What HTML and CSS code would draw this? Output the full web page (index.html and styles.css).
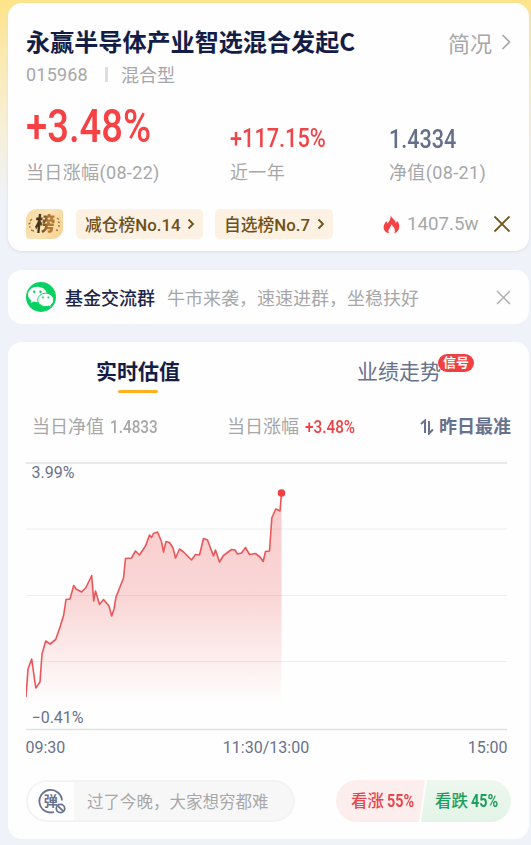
FILE: index.html
```
<!DOCTYPE html>
<html lang="zh-CN">
<head>
    <meta charset="UTF-8">
    <meta name="viewport" content="width=device-width, initial-scale=1.0">
    <title>永赢半导体产业智选混合发起C</title>
    <link rel="stylesheet" href="styles.css">
</head>
<body>

<div class="card fund">
    <div class="fund-head">
        <h1>永赢半导体产业智选混合发起C</h1>
        <a class="more">简况
            <svg width="10" height="18" viewBox="0 0 10 18"><path d="M1.500 2l7 7-7 7"/></svg>
        </a>
    </div>
    <div class="fund-code"><span class="code">015968</span><i></i><span>混合型</span></div>

    <div class="figures">
        <div>
            <div class="value big"><span class="num">+3.48%</span></div>
            <div class="label">当日涨幅(08-22)</div>
        </div>
        <div>
            <div class="value up"><span class="num">+117.15%</span></div>
            <div class="label">近一年</div>
        </div>
        <div>
            <div class="value nav"><span class="num">1.4334</span></div>
            <div class="label">净值(08-21)</div>
        </div>
    </div>

    <div class="ranks">
        <div class="medal">
            <svg width="37" height="30" viewBox="0 0 37 30">
                <path d="M6 10l-2 2M4.500 14l-2 1M4.500 18l-1.500 0M8 22l-3-1M31 9l2 1.500M32 13l2 .5M32 17l2 0M30 21l2 .5"/>
            </svg>
            <span>榜</span>
        </div>
        <div class="chip first">减仓榜No.14
            <svg width="8" height="12" viewBox="0 0 8 12"><path d="M1.500 1.500L6 6l-4.500 4.500"/></svg>
        </div>
        <div class="chip">自选榜No.7
            <svg width="8" height="12" viewBox="0 0 8 12"><path d="M1.500 1.500L6 6l-4.500 4.500"/></svg>
        </div>
        <div class="heat">
            <svg width="17" height="19" viewBox="0 0 17 19">
                <path d="M7.800 0C8.300 3.500 13 5 12.600 8.200C13.500 7.600 13.800 6.600 13.800 5.800C15.600 7.500 16.600 9.700 16.300 12C16 15.200 14 17.500 11.200 18.300C12.600 15.800 12 13.600 9.800 11.200C9.300 10.600 9 10 8.900 9.200C7.300 10.500 8 12 6.700 13.200C5.700 14.200 4.700 15.600 6 18.300C2.800 17.600 .6 15.300 .6 12.200C.6 9.500 2.300 8 3.200 6C3.800 7 4.100 7.700 4.300 8.600C6.700 6.300 7.800 3.500 7.800 0z"/>
            </svg>
            <span>1407.5w</span>
        </div>
        <svg class="close brown" width="18" height="18" viewBox="0 0 18 18"><path d="M1.500 1.500l15 15M16.500 1.500l-15 15"/></svg>
    </div>
</div>

<div class="card group">
    <svg width="30" height="30" viewBox="0 0 30 30">
        <circle cx="15" cy="15" r="15" fill="#07d160"/>
        <path d="M11.500 4.800C6.200 4.800 2 8.200 2 12.600c0 2.400 1.200 4.500 3.300 6L4.700 21.200l3-1.600c1.200.4 2.500.6 3.800.6 5.300 0 9.500-3.400 9.500-7.600S16.800 4.800 11.500 4.800z" fill="#fff"/>
        <circle cx="8.300" cy="9.800" r="1.200" fill="#07d160"/>
        <circle cx="14.500" cy="9.800" r="1.200" fill="#07d160"/>
        <path d="M19.800 11.200c-4.400 0-8 3-8 6.700s3.600 6.700 8 6.700c1 0 2-.2 2.900-.5l2.600 1.400-.6-2.300c1.800-1.200 3-3.100 3-5.300 0-3.700-3.500-6.700-7.900-6.700z" fill="#fff" stroke="#07d160"/>
        <circle cx="17" cy="15.600" r="1" fill="#07d160"/>
        <circle cx="22.400" cy="15.600" r="1" fill="#07d160"/>
    </svg>
    <b>基金交流群</b>
    <span>牛市来袭，速速进群，坐稳扶好</span>
    <svg class="close" width="15" height="15" viewBox="0 0 15 15"><path d="M1 1l13 13M14 1L1 14"/></svg>
</div>

<div class="card trend">
    <div class="tabs">
        <div class="tab active">实时估值</div>
        <div class="tab">业绩走势<span class="badge">信号</span></div>
    </div>

    <div class="today">
        <div class="today-nav">当日净值 <span class="num">1.4833</span></div>
        <div class="today-rate">当日涨幅 <span class="num">+3.48%</span></div>
        <div class="source">
            <svg width="14" height="16" viewBox="0 0 14 16"><path d="M1 5l4-3.500V14M9 2v12.500l4-4"/></svg>
            昨日最准
        </div>
    </div>

    <svg class="chart" width="482" height="306" viewBox="26 456 482 306">
        <defs>
            <linearGradient id="fade" x1="0" y1="493" x2="0" y2="705" gradientUnits="userSpaceOnUse">
                <stop offset="0" stop-color="#f9caca"/>
                <stop offset=".5" stop-color="#fad7d7"/>
                <stop offset="1" stop-color="#fefefe"/>
            </linearGradient>
        </defs>
        <path class="area" d="M26 697L28 669L31.700 659L35.800 688L40 682L42 654L45.700 641L50 644L55.700 639.500L60 627L63.700 615L66 599.500L70 599L73.700 585.500L76 589L81.700 592L86 587.500L91.700 575.500L93.700 601L95.500 591L99.500 604.500L103.500 599.500L109 606L111.700 616L114 609L116 597L123.500 578L125.500 558.500L131.500 558L135.500 551L139.500 555L145.500 546L149.500 535L151.500 537.500L153.500 533.500L157.500 532L161.500 541.500L163.500 552L166 541.500L169.500 542.500L173 548L175.500 558L179.500 549L183.500 552L191.500 560L195.500 554.500L199.500 555L203.500 538.500L207.500 540L213.500 556L215.500 550L219.500 562L223.500 555.500L231.500 549.500L235 550L237.500 554L241.500 553L245.500 547.500L249.500 554.500L255.500 553.500L260 557L263.200 561.500L265.500 551.500L269.500 551L271.800 518L275.700 509L280 511L281.500 493V700H26z"/>
        <path class="grid" d="M26 529H507M26 595.500H507M26 661.500H507"/>
        <path class="edge" d="M26 463H507M26 729.500H507"/>
        <path class="line" d="M26 697L28 669L31.700 659L35.800 688L40 682L42 654L45.700 641L50 644L55.700 639.500L60 627L63.700 615L66 599.500L70 599L73.700 585.500L76 589L81.700 592L86 587.500L91.700 575.500L93.700 601L95.500 591L99.500 604.500L103.500 599.500L109 606L111.700 616L114 609L116 597L123.500 578L125.500 558.500L131.500 558L135.500 551L139.500 555L145.500 546L149.500 535L151.500 537.500L153.500 533.500L157.500 532L161.500 541.500L163.500 552L166 541.500L169.500 542.500L173 548L175.500 558L179.500 549L183.500 552L191.500 560L195.500 554.500L199.500 555L203.500 538.500L207.500 540L213.500 556L215.500 550L219.500 562L223.500 555.500L231.500 549.500L235 550L237.500 554L241.500 553L245.500 547.500L249.500 554.500L255.500 553.500L260 557L263.200 561.500L265.500 551.500L269.500 551L271.800 518L275.700 509L280 511L281.500 493"/>
        <circle cx="281.500" cy="493" r="3.800" fill="#f04044"/>
        <text x="31.500" y="478">3.99%</text>
        <text x="31.500" y="722.500">−0.41%</text>
        <text x="25.500" y="753">09:30</text>
        <text x="266" y="753" text-anchor="middle">11:30/13:00</text>
        <text x="507.500" y="753" text-anchor="end">15:00</text>
    </svg>

    <div class="bottom">
        <div class="comment">
            <div class="bullet">
                <svg width="30" height="28" viewBox="0 0 30 28">
                    <path d="M24 13.500A11.300 11.300 0 1 0 16 25"/>
                    <text x="12.700" y="18.800" text-anchor="middle">弹</text>
                    <circle cx="22.500" cy="21.500" r="4.200"/>
                    <path d="M19.800 18.800l5.400 5.400"/>
                </svg>
            </div>
            <span>过了今晚，大家想穷都难</span>
        </div>
        <div class="vote">
            <div class="rise">看涨<span class="num">55%</span></div>
            <div class="fall">看跌<span class="num">45%</span></div>
        </div>
    </div>
</div>

</body>
</html>
```
FILE: styles.css
```
* {
    box-sizing: border-box;
}
body {
    margin: 0;
    height: 845px;
    padding: 3px 2px 0 8px;
    overflow: hidden;
    font-family: Roboto, "Noto Sans CJK SC", sans-serif;
    background: linear-gradient(#fee388 0, #fbe9ad 50px, #f7f0d8 130px, #eff3f9 200px);
    color: #a7a7a9;
}
svg {
    fill: none;
    flex-shrink: 0;
}
.card {
    background: #fefefe;
    border-radius: 14px;
}
.num {
    display: inline-block;
    transform: scaleX(.85);
    transform-origin: left center;
    font-weight: 500;
}

/* fund summary */
.fund {
    height: 248px;
    padding: 20px 18px 0;
    box-shadow: 0 1px 3px #d9dde6;
}
.fund-head {
    display: flex;
    justify-content: space-between;
    align-items: center;
    height: 36px;
}
h1 {
    margin: 0;
    font-family: "Noto Sans CJK SC", sans-serif;
    font-size: 24.1px;
    line-height: 36px;
    font-weight: 700;
    color: #141d46;
    white-space: nowrap;
}
.more {
    display: flex;
    align-items: center;
    gap: 9px;
    padding-top: 2px;
    font-size: 22px;
}
.more svg {
    stroke: #a7a7a9;
    stroke-width: 1.7;
}
.fund-code {
    display: flex;
    align-items: center;
    height: 30px;
    font-size: 18px;
}
.code {
    letter-spacing: .2px;
}
.fund-code i {
    width: 3px;
    height: 15px;
    margin: 0 13px 0 17px;
    background: #dedede;
}
.figures {
    display: grid;
    grid-template-columns: 204px 159px 1fr;
    height: 111px;
}
.value {
    height: 69px;
    padding-top: 34px;
    font-size: 26px;
    line-height: 30px;
}
.value.big {
    padding-top: 10px;
    font-size: 46px;
    line-height: 54px;
    color: #f64245;
}
.big .num, .nav .num {
    transform: scaleX(.83);
}
.value.up {
    color: #f04448;
}
.up .num {
    transform: scaleX(.835);
}
.value.nav {
    padding-top: 35px;
    color: #656f8a;
}
.label {
    padding-top: 1px;
    font-size: 18px;
    line-height: 28px;
    letter-spacing: .35px;
    white-space: nowrap;
}
.ranks {
    display: flex;
    align-items: center;
    height: 50px;
    margin-top: -1px;
}
.medal {
    display: grid;
    place-items: center;
    width: 37px;
    height: 30px;
    margin-right: 13px;
    border-radius: 11px 4px 11px 4px;
    background: linear-gradient(120deg, #f5d9a0, #fbe3b5 50%, #f6cf8c);
}
.medal svg, .medal span {
    grid-area: 1 / 1;
}
.medal svg {
    stroke: #a57c3c;
    stroke-width: 1.4;
}
.medal span {
    font-size: 20px;
    line-height: 28px;
    font-weight: 900;
    transform: skewX(-5deg);
    color: transparent;
    background: linear-gradient(90deg, #3f2f17 15%, #b57a34 70%);
    -webkit-background-clip: text;
    background-clip: text;
}
.chip {
    display: flex;
    align-items: center;
    justify-content: space-between;
    width: 118px;
    height: 30px;
    padding: 0 8px 1px 9px;
    border-radius: 5px;
    background: #fdf1e3;
    color: #6e5019;
    font-size: 16.8px;
    font-weight: 500;
    white-space: nowrap;
}
.chip.first {
    width: 127px;
    margin-right: 12px;
}
.chip svg {
    stroke: #6e5019;
    stroke-width: 1.8;
}
.heat {
    display: flex;
    align-items: center;
    gap: 7px;
    margin-left: 50px;
    font-size: 18.7px;
}
.heat svg {
    fill: #f64245;
}
.close {
    margin-left: auto;
    stroke: #b0b0b2;
    stroke-width: 1.5;
}
.close.brown {
    stroke: #75571f;
    stroke-width: 1.8;
}

/* chat group banner */
.group {
    display: flex;
    align-items: center;
    height: 54px;
    margin-top: 19px;
    padding: 0 18px;
    font-size: 18px;
}
.group b {
    margin: 0 12px 0 9px;
    font-weight: 500;
    color: #1c2548;
}

/* valuation trend */
.trend {
    height: 497px;
    margin-top: 18px;
    padding: 0 18px;
}
.tabs {
    display: flex;
    height: 66px;
    padding: 12px 0 0 70px;
    font-size: 21px;
    line-height: 36px;
}
.tab {
    position: relative;
    width: 84px;
    color: #68728c;
    white-space: nowrap;
}
.tab.active {
    margin-right: 177px;
    color: #141d46;
    font-weight: 700;
}
.tab.active::after {
    content: "";
    display: block;
    width: 40px;
    height: 3px;
    margin: 0 auto;
    border-radius: 2px;
    background: #ffb11f;
}
.badge {
    position: absolute;
    left: 81px;
    top: 0;
    width: 36px;
    height: 18px;
    border-radius: 9px;
    background: #f04044;
    color: #fff;
    font-size: 13px;
    line-height: 18px;
    font-weight: 700;
    text-align: center;
}
.today {
    display: grid;
    grid-template-columns: 195px 1fr auto;
    height: 38px;
    padding-left: 6px;
    font-size: 18px;
    line-height: 38px;
    white-space: nowrap;
}
.today .num {
    margin-left: 2px;
}
.today-rate .num {
    color: #f04044;
}
.source {
    display: flex;
    align-items: center;
    gap: 5px;
    color: #68728c;
    font-weight: 700;
}
.source svg {
    stroke: #68728c;
    stroke-width: 2;
}
.chart {
    display: block;
    margin-top: 10px;
}
.chart text {
    fill: #68728c;
    font-size: 16px;
}
.chart .area {
    fill: url(#fade);
}
.chart .line {
    stroke: #e9575a;
    stroke-width: 1.6;
    stroke-linejoin: round;
}
.chart .grid {
    stroke: #8890a0;
    stroke-opacity: .14;
}
.chart .edge {
    stroke: #e0e1e3;
    stroke-width: 1.5;
}
.bottom {
    display: flex;
    justify-content: space-between;
    margin-top: 18px;
}
.comment {
    display: flex;
    align-items: center;
    width: 269px;
    height: 42px;
    border: 2px solid #f3f3f4;
    border-radius: 21px;
    background: #f7f7f8;
    font-size: 16.5px;
    overflow: hidden;
}
.bullet {
    display: flex;
    align-items: center;
    width: 46px;
    height: 38px;
    margin-right: 13px;
    padding-left: 10px;
    background: #fefefe;
}
.bullet svg {
    stroke: #68728c;
    stroke-width: 1.8;
}
.bullet text {
    fill: #68728c;
    stroke: none;
    font-size: 14px;
    font-weight: 700;
}
.vote {
    display: flex;
    width: 175px;
    height: 42px;
    font-size: 16.5px;
    line-height: 42px;
    font-weight: 500;
    white-space: nowrap;
}
.rise, .fall {
    height: 42px;
}
.rise {
    width: 89px;
    padding-left: 15px;
    border-radius: 21px 0 0 21px;
    background: #fdeeee;
    color: #e8474b;
    clip-path: polygon(0 0, 100% 0, 83px 100%, 0 100%);
}
.fall {
    width: 90px;
    margin-left: -4px;
    padding-left: 14px;
    border-radius: 0 21px 21px 0;
    background: linear-gradient(#edf7ef, #e3f4e6);
    color: #1f9f5c;
    clip-path: polygon(6px 0, 100% 0, 100% 100%, 0 100%);
}
.vote .num {
    margin-left: 3px;
    font-size: 18px;
    font-weight: 700;
    transform: scaleX(.8);
}
```
